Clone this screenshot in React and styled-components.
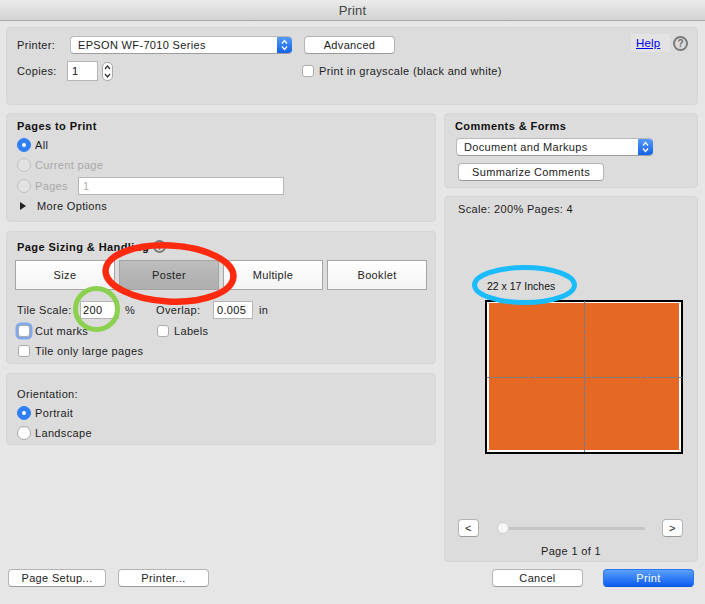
import React from "react";
import styled, { createGlobalStyle } from "styled-components";

const Global = createGlobalStyle`
  html, body { margin: 0; padding: 0; background: #e6e6e6; }
  body { font-family: "Liberation Sans", Arial, sans-serif; font-size: 11px; letter-spacing: .34px; color: #1c1c1c; }
`;
const Dialog = styled.div`
  position: relative; width: 705px; height: 604px; overflow: hidden; background: #e6e6e6;
  display: flex; flex-direction: column;
`;
const TitleBar = styled.div`
  height: 20px; border-bottom: 1px solid #a9a9a9; flex: none;
  background: linear-gradient(#ebebeb, #d2d2d2);
  display: flex; align-items: center; justify-content: center;
  font-size: 13px; letter-spacing: .2px; color: #444;
`;
const Panel = styled.section`
  box-sizing: border-box; background: #dcdcdc; border: 1px solid #d6d6d6; border-radius: 4px;
  position: relative;
  height: ${p => p.$h}px;
  padding: ${p => p.$pad || "0 10px"};
  display: flex; flex-direction: column;
`;
const TopPanel = styled(Panel)`margin: 6px 7px 0 6px;`;
const Columns = styled.div`
  display: grid; grid-template-columns: 430px 254px; column-gap: 8px; margin: 8px 7px 0 6px;
`;
const Col = styled.div`display: flex; flex-direction: column; gap: ${p => p.$gap}px; align-items: stretch;`;
const Row = styled.div`
  display: flex; align-items: center; height: ${p => p.$h || 20}px; flex: none;
  margin-top: ${p => p.$mt || 0}px; margin-left: ${p => p.$ml || 0}px;
`;
const Heading = styled.div`
  font-weight: 700; font-size: 11px; letter-spacing: .42px; color: #111; height: 20px; line-height: 20px; flex: none;
  margin-bottom: ${p => p.$mb || 0}px;
`;
const Label = styled.span`
  width: ${p => (p.$w ? p.$w + "px" : "auto")}; flex: none; white-space: nowrap;
  margin-left: ${p => p.$ml || 0}px;
  color: ${p => (p.$dim ? "#a9a9a9" : "inherit")};
`;
const SelectBox = styled.div`
  box-sizing: border-box; width: ${p => p.$w}px; height: 18px; flex: none; background: #fff; border-radius: 4px;
  border: 1px solid #b9b9b9; border-bottom-color: #9d9d9d; border-right: 0;
  margin-left: ${p => p.$ml || 0}px;
  display: flex; align-items: center; justify-content: space-between; padding-left: 7px; overflow: hidden;
`;
const SelectArrow = styled.span`
  width: 15px; height: 18px; background: linear-gradient(#5a9dfb, #0f5fe8);
  display: flex; align-items: center; justify-content: center;
`;
const Button = styled.div`
  box-sizing: border-box; width: ${p => p.$w}px; height: 18px; flex: none; background: ${p => (p.$primary ? "linear-gradient(#5ba0fb, #0c5df0)" : "#fff")};
  color: ${p => (p.$primary ? "#fff" : "#222")};
  border-radius: 4px; border: 1px solid ${p => (p.$primary ? "#2c78f0" : "#b4b4b4")}; border-bottom-color: ${p => (p.$primary ? "#0b55dc" : "#9a9a9a")};
  margin-left: ${p => p.$ml || 0}px;
  display: flex; align-items: center; justify-content: center;
`;
const Input = styled.div`
  box-sizing: border-box; width: ${p => p.$w}px; height: ${p => p.$h}px; flex: none; background: #fff;
  border: 1px solid #b5b5b5; padding-left: ${p => p.$pl || 4}px; margin-left: ${p => p.$ml || 0}px;
  display: flex; align-items: center; color: ${p => (p.$dim ? "#b0b0b0" : "#111")};
`;
const Stepper = styled.div`
  box-sizing: border-box; width: 11px; height: 19px; margin-left: 4px; flex: none; background: #fff;
  border: 1px solid #a9a9a9; border-radius: 5px;
  display: flex; align-items: center; justify-content: center;
`;
const Check = styled.span`
  box-sizing: border-box; width: 12px; height: 12px; flex: none; background: #fff; border: 1px solid #adadad; border-radius: 3px;
  margin-left: ${p => p.$ml || 0}px; margin-right: 5px;
  box-shadow: ${p => (p.$focus ? "0 0 0 2.5px #7fa9ea" : "none")};
`;
const Radio = styled.span`
  box-sizing: border-box; width: 14px; height: 14px; flex: none; border-radius: 50%; margin-right: 4px;
  background: ${p => (p.$on ? "#2f7ff7" : p.$dim ? "#e2e2e2" : "#fff")};
  border: 1px solid ${p => (p.$on ? "#2f7ff7" : p.$dim ? "#c2c2c2" : "#a8a8a8")};
  display: flex; align-items: center; justify-content: center;
  &::after { content: ""; display: ${p => (p.$on ? "block" : "none")}; width: 4px; height: 4px; border-radius: 50%; background: #fff; }
`;
const Triangle = styled.span`
  width: 0; height: 0; flex: none; margin: 0 11px 0 3px;
  border-left: 6px solid #222; border-top: 4px solid transparent; border-bottom: 4px solid transparent;
`;
const HelpLink = styled.a`
  box-sizing: border-box; width: 39px; height: 18px; background: #e3e3e3; color: #0000ee; text-decoration: underline;
  font-size: 11.5px; letter-spacing: .2px; padding-left: 5px; display: flex; align-items: center;
`;
const HelpIcon = styled.span`
  box-sizing: border-box; width: 15px; height: 15px; border: 2px solid #7a7a7a; border-radius: 50%; margin-left: 3px;
  display: flex; align-items: center; justify-content: center; color: #6f6f6f; font-weight: 700; font-size: 10px; letter-spacing: 0;
`;
const HelpGroup = styled.div`position: absolute; top: 6px; right: 9px; display: flex; align-items: center;`;
const InfoIcon = styled(HelpIcon)`width: 13px; height: 13px; font-size: 9px; margin-left: 4px;`;
const InfoWrap = styled.span`display: inline-flex; vertical-align: text-bottom;`;
const Segments = styled.div`display: flex; gap: 4px; margin-left: -2px; height: 30px; flex: none;`;
const Segment = styled.div`
  box-sizing: border-box; width: 100px; height: 30px; border: 1px solid #a5a5a5; flex: none;
  background: ${p => (p.$on ? "linear-gradient(#bdbdbd, #aeaeae)" : "linear-gradient(#fff, #f4f4f4)")};
  display: flex; align-items: center; justify-content: center; color: #222;
`;
const SizeText = styled.div`margin: 60px 0 0 32px; height: 14px; line-height: 14px; font-size: 10.5px; letter-spacing: 0; color: #111;`;
const Paper = styled.div`
  box-sizing: border-box; width: 198px; height: 154px; margin: 7px 0 0 30px; flex: none; position: relative;
  border: 2px solid #000; background: #fff; padding: 1px 2px 2px;
`;
const Sheet = styled.div`width: 100%; height: 100%; background: #e56824;`;
const CutV = styled.span`
  position: absolute; top: -1px; bottom: 0; left: 97px; width: 1px;
  background: linear-gradient(180deg, #727e86 6px, transparent 6px) 0 0 / 1px 7px repeat-y;
`;
const CutH = styled.span`
  position: absolute; left: 0; right: -1px; top: 75px; height: 1px;
  background: linear-gradient(90deg, #727e86 6px, transparent 6px) 0 0 / 7px 1px repeat-x;
`;
const Nav = styled.div`display: flex; align-items: center; height: 18px; margin: 65px 0 0 3px; flex: none;`;
const NavBtn = styled.div`
  box-sizing: border-box; width: 21px; height: 18px; flex: none; background: #fff; border: 1px solid #b4b4b4; border-bottom-color: #999; border-radius: 4px;
  display: flex; align-items: center; justify-content: center; font-size: 11px; color: #222;
`;
const Track = styled.div`
  position: relative; width: 148px; height: 3px; background: #c5c5c5; border-radius: 2px; margin: 0 17px 0 18px; flex: none;
`;
const Thumb = styled.span`
  position: absolute; left: 0; top: -5px; box-sizing: border-box; width: 12px; height: 12px; border-radius: 50%;
  background: #f6f6f6; border: 1px solid #cfcfcf;
`;
const PageLabel = styled.div`text-align: center; margin-top: 4px; height: 20px; line-height: 20px;`;
const Footer = styled.div`
  display: flex; align-items: center; margin: 7px 11px 0 8px; height: 18px; flex: none;
`;
const Push = styled.div`flex: 1;`;
const Overlay = styled.svg`position: absolute; left: 0; top: 0; pointer-events: none;`;

const Updown = ({ small }) => (
  <svg width={small ? 7 : 9} height={small ? 15 : 12} viewBox={small ? "0 0 7 15" : "0 0 9 12"} fill="none" stroke={small ? "#333" : "#fff"} strokeWidth="1.3">
    {small
      ? <><path d="M1 5l2.5-3L6 5" /><path d="M1 10l2.5 3L6 10" /></>
      : <><path d="M2 4.5l2.5-3 2.5 3" /><path d="M2 7.5l2.5 3 2.5-3" /></>}
  </svg>
);

export default function App() {
  return (
    <Dialog>
      <Global />
      <TitleBar>Print</TitleBar>
      <TopPanel $h={78} $pad="8px 10px 0">
        <Row $h={18}>
          <Label $w={53}>Printer:</Label>
          <SelectBox $w={222}>EPSON WF-7010 Series<SelectArrow><Updown /></SelectArrow></SelectBox>
          <Button $w={91} $ml={12}>Advanced</Button>
        </Row>
        <Row $h={20} $mt={7}>
          <Label $w={50}>Copies:</Label>
          <Input $w={31} $h={20} $pl={4}>1</Input>
          <Stepper><Updown small /></Stepper>
          <Check $ml={189} />
          <Label>Print in grayscale (black and white)</Label>
        </Row>
        <HelpGroup><HelpLink>Help</HelpLink><HelpIcon>?</HelpIcon></HelpGroup>
      </TopPanel>
      <Columns>
        <Col $gap={9}>
          <Panel $h={109} $pad="2px 10px 0">
            <Heading>Pages to Print</Heading>
            <Row $h={18}><Radio $on /><Label>All</Label></Row>
            <Row $h={20} $mt={1}><Radio $dim /><Label $dim>Current page</Label></Row>
            <Row $h={20} $mt={1}><Radio $dim /><Label $dim>Pages</Label><Input $w={206} $h={18} $ml={10} $pl={4} $dim>1</Input></Row>
            <Row $h={20}><Triangle /><Label>More Options</Label></Row>
          </Panel>
          <Panel $h={133} $pad="5px 10px 0">
            <Heading $mb={3}>Page Sizing &amp; Handling<InfoWrap><InfoIcon>i</InfoIcon></InfoWrap></Heading>
            <Segments>
              <Segment>Size</Segment>
              <Segment $on>Poster</Segment>
              <Segment>Multiple</Segment>
              <Segment>Booklet</Segment>
            </Segments>
            <Row $h={18} $mt={11}>
              <Label $w={63}>Tile Scale:</Label>
              <Input $w={39} $h={18} $pl={2}>200</Input>
              <Label $ml={6} $w={31}>%</Label>
              <Label $w={57}>Overlap:</Label>
              <Input $w={40} $h={18} $pl={3}>0.005</Input>
              <Label $ml={6}>in</Label>
            </Row>
            <Row $h={20} $mt={2}>
              <Check $focus $ml={1} /><Label $w={122}>Cut marks</Label>
              <Check /><Label>Labels</Label>
            </Row>
            <Row $h={20} $mt={0}><Check $ml={1} /><Label>Tile only large pages</Label></Row>
          </Panel>
          <Panel $h={72} $pad="10px 10px 0">
            <Row $h={20}><Label>Orientation:</Label></Row>
            <Row $h={20} $mt={-1}><Radio $on /><Label>Portrait</Label></Row>
            <Row $h={20}><Radio /><Label>Landscape</Label></Row>
          </Panel>
        </Col>
        <Col $gap={8}>
          <Panel $h={75} $pad="2px 10px 0">
            <Heading>Comments &amp; Forms</Heading>
            <Row $h={18} $mt={2} $ml={1}>
              <SelectBox $w={197}>Document and Markups<SelectArrow><Updown /></SelectArrow></SelectBox>
            </Row>
            <Row $h={18} $mt={7} $ml={3}><Button $w={146}>Summarize Comments</Button></Row>
          </Panel>
          <Panel $h={366} $pad="2px 10px 0">
            <Row $h={20} $ml={3}><Label>Scale: 200% Pages: 4</Label></Row>
            <SizeText>22 x 17 Inches</SizeText>
            <Paper><Sheet /><CutV /><CutH /></Paper>
            <Nav>
              <NavBtn>&lt;</NavBtn>
              <Track><Thumb /></Track>
              <NavBtn>&gt;</NavBtn>
            </Nav>
            <PageLabel>Page 1 of 1</PageLabel>
          </Panel>
        </Col>
      </Columns>
      <Footer>
        <Button $w={98}>Page Setup...</Button>
        <Button $w={91} $ml={12}>Printer...</Button>
        <Push />
        <Button $w={91}>Cancel</Button>
        <Button $w={91} $ml={20} $primary>Print</Button>
      </Footer>
      <Overlay width="705" height="604" fill="none">
        <ellipse cx="169.5" cy="273.5" rx="64" ry="28" stroke="#fd2a10" strokeWidth="6.5" transform="rotate(3 169.5 273.5)" />
        <ellipse cx="96.5" cy="309" rx="21" ry="20.5" stroke="#8bd04e" strokeWidth="5" />
        <ellipse cx="524.5" cy="285" rx="50" ry="17.5" stroke="#1bbcfe" strokeWidth="5" />
      </Overlay>
    </Dialog>
  );
}
